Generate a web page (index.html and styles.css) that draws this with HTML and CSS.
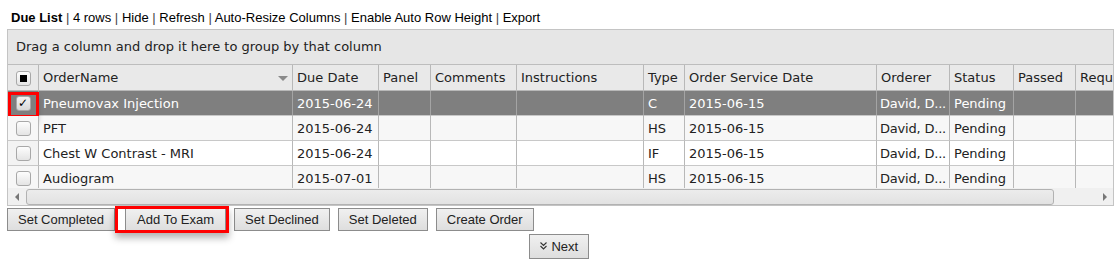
FILE: index.html
```html
<!DOCTYPE html>
<html lang="en">

<head>
    <meta charset="UTF-8" />
    <title>Due List</title>
    <link rel="stylesheet" href="styles.css">
</head>

<body>

    <div class="toolbar">
        <b>Due List</b> <span class="sep">|</span> <a>4 rows</a> <span class="sep">|</span> <a>Hide</a>
        <span class="sep">|</span> <a>Refresh</a> <span class="sep">|</span> <a>Auto-Resize Columns</a>
        <span class="sep">|</span> <a>Enable Auto Row Height</a> <span class="sep">|</span> <a>Export</a>
    </div>

    <div class="grid">
        <div class="group-panel">Drag a column and drop it here to group by that column</div>

        <div class="grid-body">
            <table>
                <colgroup>
                    <col style="width: 31px">
                    <col style="width: 254px">
                    <col style="width: 86px">
                    <col style="width: 52px">
                    <col style="width: 86px">
                    <col style="width: 127px">
                    <col style="width: 41px">
                    <col style="width: 192px">
                    <col style="width: 73px">
                    <col style="width: 64px">
                    <col style="width: 62px">
                    <col style="width: 120px">
                </colgroup>
                <thead>
                    <tr>
                        <th class="check-cell"><span class="checkbox partial"></span></th>
                        <th class="sortable">OrderName<span class="sort-arrow"></span></th>
                        <th>Due Date</th>
                        <th>Panel</th>
                        <th>Comments</th>
                        <th>Instructions</th>
                        <th>Type</th>
                        <th>Order Service Date</th>
                        <th>Orderer</th>
                        <th>Status</th>
                        <th>Passed</th>
                        <th>Requ</th>
                    </tr>
                </thead>
                <tbody>
                    <tr class="selected">
                        <td class="check-cell marked"><span class="checkbox checked">&#10003;</span></td>
                        <td>Pneumovax Injection</td>
                        <td>2015-06-24</td>
                        <td></td>
                        <td></td>
                        <td></td>
                        <td>C</td>
                        <td>2015-06-15</td>
                        <td class="short">David, D...</td>
                        <td>Pending</td>
                        <td></td>
                        <td></td>
                    </tr>
                    <tr class="alt">
                        <td class="check-cell"><span class="checkbox"></span></td>
                        <td>PFT</td>
                        <td>2015-06-24</td>
                        <td></td>
                        <td></td>
                        <td></td>
                        <td>HS</td>
                        <td>2015-06-15</td>
                        <td class="short">David, D...</td>
                        <td>Pending</td>
                        <td></td>
                        <td></td>
                    </tr>
                    <tr>
                        <td class="check-cell"><span class="checkbox"></span></td>
                        <td>Chest W Contrast - MRI</td>
                        <td>2015-06-24</td>
                        <td></td>
                        <td></td>
                        <td></td>
                        <td>IF</td>
                        <td>2015-06-15</td>
                        <td class="short">David, D...</td>
                        <td>Pending</td>
                        <td></td>
                        <td></td>
                    </tr>
                    <tr class="alt">
                        <td class="check-cell"><span class="checkbox"></span></td>
                        <td>Audiogram</td>
                        <td>2015-07-01</td>
                        <td></td>
                        <td></td>
                        <td></td>
                        <td>HS</td>
                        <td>2015-06-15</td>
                        <td class="short">David, D...</td>
                        <td>Pending</td>
                        <td></td>
                        <td></td>
                    </tr>
                </tbody>
            </table>
        </div>

        <div class="hscroll">
            <span class="arrow left"></span>
            <span class="thumb"></span>
            <span class="arrow right"></span>
        </div>
    </div>

    <div class="actions">
        <button>Set Completed</button>
        <span class="marked-btn"><button>Add To Exam</button></span>
        <button>Set Declined</button>
        <button>Set Deleted</button>
        <button>Create Order</button>
    </div>

    <div class="pager">
        <button class="next">
            <svg width="7" height="8" viewBox="0 0 7 8">
                <path d="M0.5 0.5 L3.5 3.5 L6.5 0.5 M0.5 4 L3.5 7 L6.5 4" fill="none" stroke="#333" stroke-width="1.1" />
            </svg>
            Next
        </button>
    </div>

</body>

</html>
```

FILE: styles.css
```css
body {
    margin: 0;
    font-family: "Liberation Sans", Arial, sans-serif;
    background: #fff;
    color: #000;
}

.toolbar {
    height: 19px;
    padding: 10px 0 0 11px;
    font-size: 13px;
    line-height: 16px;
    white-space: nowrap;
}

.toolbar a {
    color: #000;
    text-decoration: none;
}

.sep {
    color: #444;
}

.grid {
    margin: 0 4px 0 7px;
    border: 1px solid #c4c4c4;
    overflow: hidden;
    font-family: "DejaVu Sans", Verdana, sans-serif;
    font-size: 13px;
}

.group-panel {
    height: 34px;
    line-height: 34px;
    padding-left: 8px;
    background: #e6e6e6;
    border-bottom: 1px solid #bdbdbd;
    color: #222;
}

.grid-body {
    height: 123px;
    overflow: hidden;
}

table {
    width: 1188px;
    table-layout: fixed;
    border-collapse: separate;
    border-spacing: 0;
}

th,
td {
    height: 24px;
    padding: 0 0 0 4px;
    border-right: 1px solid #b8b8b8;
    border-bottom: 1px solid #c8c8c8;
    text-align: left;
    white-space: nowrap;
    overflow: hidden;
    color: #222;
    font-weight: normal;
}

td.short {
    padding-left: 3px;
    letter-spacing: -0.2px;
}

th {
    height: 25px;
    background: #e9e9e9;
    border-bottom-color: #b8b8b8;
}

tr.alt td {
    background: #f7f7f7;
}

tr.selected td {
    background: #7f7f7f;
    color: #fff;
    border-right-color: #a4a4a4;
}

.check-cell {
    padding: 0;
    text-align: center;
    position: relative;
    overflow: visible;
}

td.check-cell {
    background: #f3f3f3;
}

.checkbox {
    display: inline-block;
    width: 13px;
    height: 13px;
    border: 1px solid #a8a8a8;
    border-radius: 3px;
    background: linear-gradient(#fdfdfd, #e4e4e4);
    vertical-align: middle;
    position: relative;
    font-size: 12px;
    line-height: 13px;
    color: #000;
    box-sizing: content-box;
}

.checkbox.partial::after {
    content: "";
    position: absolute;
    left: 3px;
    top: 3px;
    width: 7px;
    height: 7px;
    background: #000;
}

.checkbox.checked {
    background: linear-gradient(#f4f4f4, #d8d8d8);
}

.marked::after {
    content: "";
    position: absolute;
    left: 0;
    top: 1px;
    width: 25px;
    height: 20px;
    border: 3px solid #f00;
    box-shadow: -2px 5px 6px rgba(0, 0, 0, 0.35);
}

.sortable {
    position: relative;
}

.sort-arrow {
    position: absolute;
    right: 4px;
    top: 11px;
    border-left: 5px solid transparent;
    border-right: 5px solid transparent;
    border-top: 5px solid #8a8a8a;
}

.hscroll {
    height: 17px;
    background: #f0f0f0;
    position: relative;
    display: flex;
    align-items: center;
}

.thumb {
    height: 14px;
    margin-left: 1px;
    width: 1026px;
    border: 1px solid #b2b2b2;
    border-radius: 3px;
    background: linear-gradient(#ececec, #e2e2e2);
}

.arrow {
    width: 17px;
    height: 17px;
    display: flex;
    align-items: center;
    justify-content: center;
}

.arrow.left::before {
    content: "";
    border-top: 4px solid transparent;
    border-bottom: 4px solid transparent;
    border-right: 4px solid #777;
}

.arrow.right {
    margin-left: auto;
}

.arrow.right::before {
    content: "";
    border-top: 4px solid transparent;
    border-bottom: 4px solid transparent;
    border-left: 4px solid #777;
}

.actions {
    display: flex;
    gap: 8px;
    margin: 2px 0 0 7px;
}

button {
    height: 23px;
    padding: 0 10px;
    font-family: "Liberation Sans", Arial, sans-serif;
    font-size: 13px;
    color: #222;
    background: linear-gradient(#f0f0f0, #dedede);
    border: 1px solid #8c8c8c;
    border-radius: 0;
    cursor: pointer;
}

.marked-btn {
    position: relative;
    display: inline-block;
    margin-left: 2px;
}

.marked-btn button {
    display: block;
    padding: 0 11px;
}

.marked-btn::after {
    content: "";
    position: absolute;
    left: -10px;
    top: -2px;
    right: -3px;
    bottom: -2px;
    border: 3px solid #f00;
    box-shadow: 0 5px 7px rgba(0, 0, 0, 0.3);
}

.pager {
    text-align: center;
    margin-top: 3px;
}

.next {
    height: 25px;
    padding: 0 10px;
}

.next svg {
    vertical-align: 1px;
    margin-right: 1px;
}
```
